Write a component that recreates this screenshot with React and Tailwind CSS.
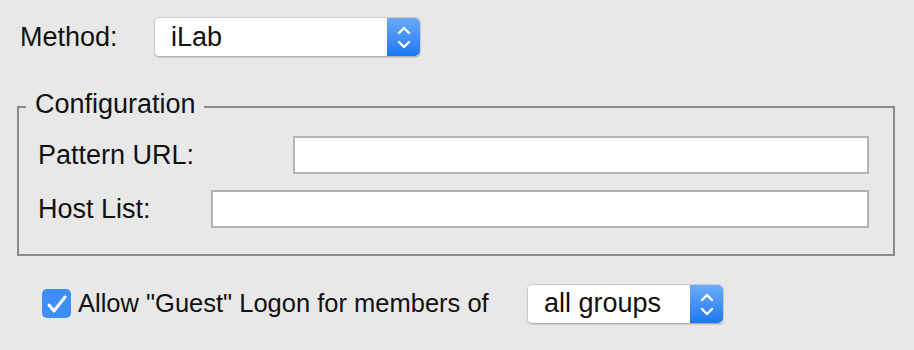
import React from 'react'

const font = { fontFamily: '"Liberation Sans", Arial, sans-serif' }

function Stepper() {
	return (
		<div className="w-[33px] self-stretch rounded-r-[5px] bg-gradient-to-b from-[#6aaaf8] to-[#1877f4] flex items-center justify-center">
			<svg width="32" height="40" viewBox="0 0 32 40" fill="none" stroke="white" strokeWidth="2.4" strokeLinecap="round" strokeLinejoin="round">
				<polyline points="11,16 16,11 21,16" />
				<polyline points="11,25 16,30 21,25" />
			</svg>
		</div>
	)
}

function PopUp({ value, className }) {
	return (
		<div className={`flex h-[40px] items-stretch rounded-[5px] bg-white border border-[#c9c9c9] border-b-[#b0b0b0] shadow-[0_1px_1px_rgba(0,0,0,0.12)] ${className}`}>
			<div className="flex-1 flex items-center pl-[16px] text-[27px] text-[#111]">{value}</div>
			<Stepper />
		</div>
	)
}

function Field({ label, labelWidth }) {
	return (
		<div className="flex items-center">
			<div className={`${labelWidth} text-[27px] text-[#111]`}>{label}</div>
			<div className="flex-1 h-[38px] bg-white border-2 border-[#b4b4b4]" />
		</div>
	)
}

export default function App() {
	return (
		<div className="w-[914px] h-[350px] bg-[#e8e8e8] overflow-hidden" style={font}>
			<div className="flex items-center pl-[20px] pt-[17px]">
				<div className="w-[134px] text-[27px] text-[#111]">Method:</div>
				<PopUp value="iLab" className="w-[267px]" />
			</div>

			<fieldset className="ml-[17px] mr-[19px] mt-[30px] border-2 border-[#8a8a8a] pl-[7px] pr-[24px] pb-[24px]">
				<legend className="px-[9px] pr-[8px] text-[27px] leading-[32px] pb-[6px] text-[#111]">Configuration</legend>
				<div className="flex flex-col gap-[14px] pl-[12px] mt-[9px]">
					<Field label="Pattern URL:" labelWidth="w-[255px]" />
					<Field label="Host List:" labelWidth="w-[173px]" />
				</div>
			</fieldset>

			<div className="flex items-center mt-[28px] pl-[42px]">
				<div className="w-[29px] h-[29px] rounded-[5px] bg-[#3d8ef6] flex items-center justify-center">
					<svg width="29" height="29" viewBox="0 0 29 29" fill="none" stroke="white" strokeWidth="3" strokeLinecap="round" strokeLinejoin="round">
						<polyline points="7,16 12,22 23,8" />
					</svg>
				</div>
				<div className="ml-[7px] w-[449px] text-[25.5px] text-[#111]">Allow "Guest" Logon for members of</div>
				<PopUp value="all groups" className="w-[197px]" />
			</div>
		</div>
	)
}
